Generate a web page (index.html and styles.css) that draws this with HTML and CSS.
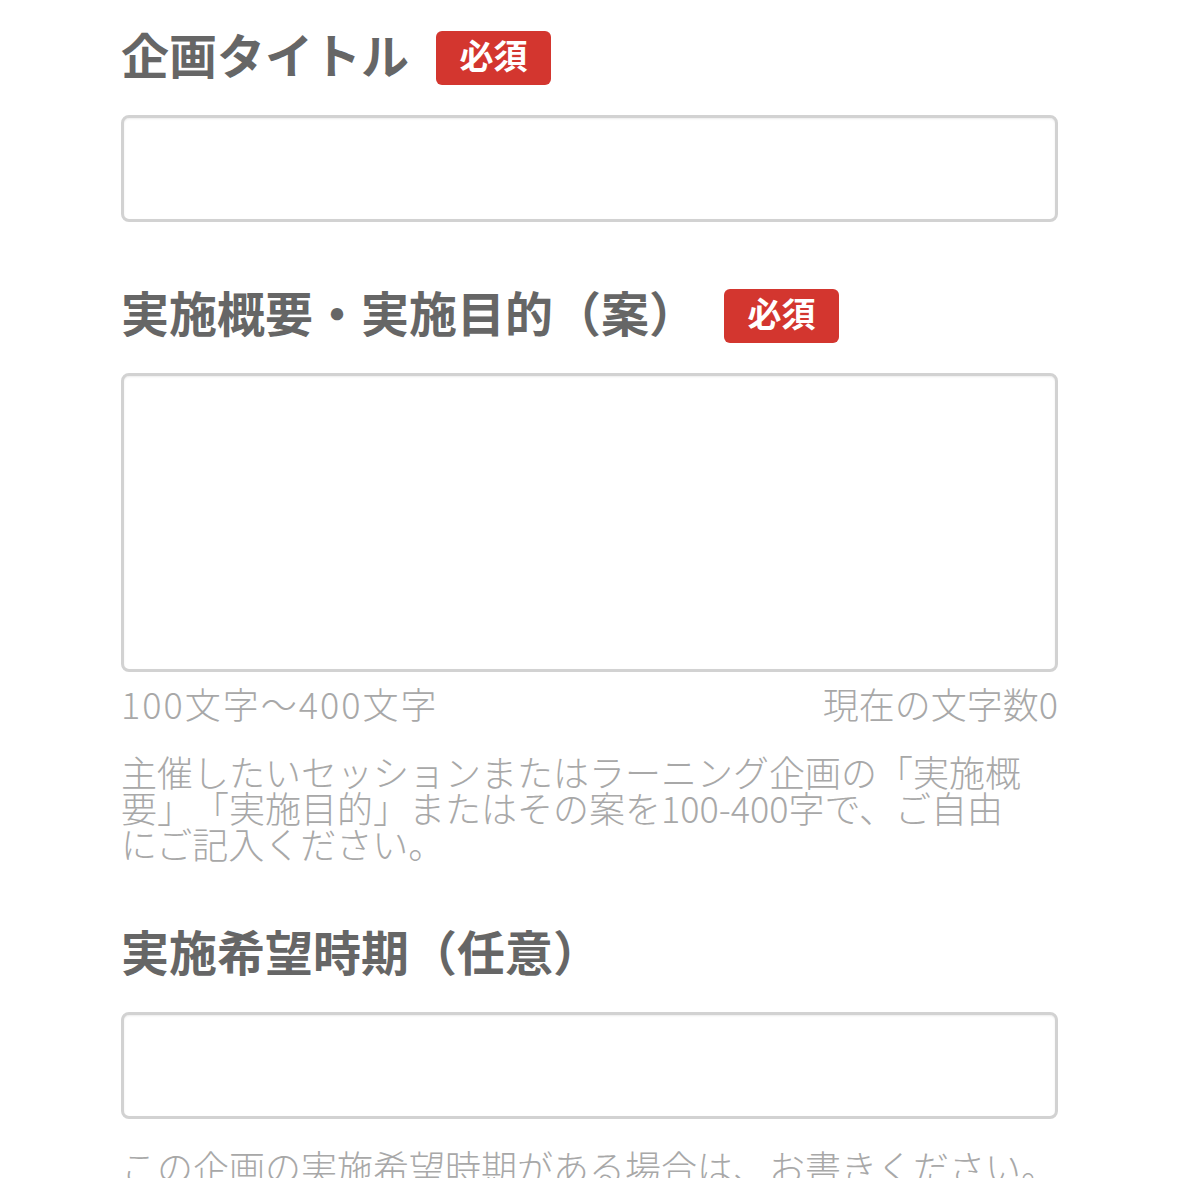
FILE: index.html
```html
<!DOCTYPE html>
<html lang="ja">
<head>
<meta charset="utf-8">
<title>企画フォーム</title>
<link rel="stylesheet" href="styles.css">
</head>
<body>
<form class="form">
  <div class="field">
    <div class="label-row">
      <span class="label">企画タイトル</span>
      <span class="badge">必須</span>
    </div>
    <input class="input" type="text">
  </div>

  <div class="field">
    <div class="label-row">
      <span class="label">実施概要・実施目的（案）</span>
      <span class="badge">必須</span>
    </div>
    <textarea class="input textarea"></textarea>
    <div class="counter">
      <span class="counter-range">100文字〜400文字</span>
      <span>現在の文字数0</span>
    </div>
    <p class="help help-wrap">主催したいセッションまたはラーニング企画の「実施概要」「実施目的」またはその案を100-400字で、ご自由にご記入ください。</p>
  </div>

  <div class="field">
    <div class="label-row">
      <span class="label">実施希望時期（任意）</span>
    </div>
    <input class="input" type="text">
    <p class="help help-after">この企画の実施希望時期がある場合は、お書きください。</p>
  </div>
</form>
</body>
</html>
```

FILE: styles.css
```css
html, body {
  margin: 0;
  padding: 0;
  background: #ffffff;
}

body {
  font-family: "Noto Sans CJK JP", "Noto Sans", sans-serif;
  overflow: hidden;
  height: 1178px;
}

.form {
  width: 937px;
  padding: 31px 0 0 121px;
  display: flex;
  flex-direction: column;
  gap: 67px;
}

.field {
  display: flex;
  flex-direction: column;
}

.label-row {
  display: flex;
  align-items: center;
  height: 54px;
  margin-bottom: 30px;
}

.label {
  font-size: 48px;
  font-weight: 700;
  color: #666666;
  line-height: 1;
  white-space: nowrap;
  padding-bottom: 10px;
  text-spacing-trim: space-all;
}

.badge {
  margin-left: 27px;
  width: 115px;
  height: 54px;
  box-sizing: border-box;
  padding-bottom: 7px;
  border-radius: 6px;
  background: #d3362f;
  color: #ffffff;
  font-size: 34px;
  font-weight: 700;
  display: flex;
  align-items: center;
  justify-content: center;
  line-height: 1;
}

.input {
  box-sizing: border-box;
  width: 937px;
  height: 107px;
  margin: 0;
  border: 3px solid #d2d2d2;
  border-radius: 8px;
  background: #ffffff;
  box-shadow: inset 0 1px 2px rgba(0, 0, 0, 0.08);
  outline: none;
  font: inherit;
  padding: 0;
}

.textarea {
  height: 299px;
  resize: none;
  display: block;
}

.counter {
  display: flex;
  justify-content: space-between;
  margin-top: 13px;
  font-size: 36px;
  font-weight: 300;
  line-height: 36px;
  color: #a8a8a8;
}

.counter-range {
  letter-spacing: 2px;
}

.help {
  margin: 32px 0 0 0;
  font-size: 36px;
  font-weight: 300;
  line-height: 36px;
  color: #a8a8a8;
  line-break: strict;
  text-spacing-trim: space-all;
}

.help-wrap {
  padding-right: 26px;
}

.help-after {
  margin-top: 29px;
  white-space: nowrap;
}
```
